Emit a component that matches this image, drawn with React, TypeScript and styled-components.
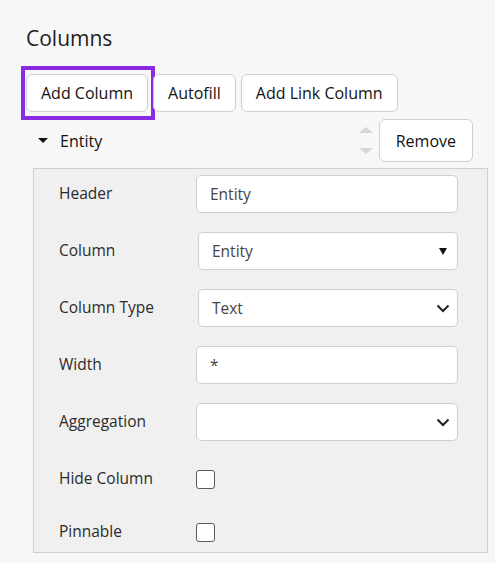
import React from "react";
import styled, { createGlobalStyle } from "styled-components";

const PAGE_BG = `#f7f7f7`;
const PANEL_BG = `#f0f0f0`;
const BORDER_COLOR = `#cfcfcf`;
const HIGHLIGHT = `#8a2be2`;

const GlobalStyle = createGlobalStyle`
  html, body {
    margin: 0;
    padding: 0;
    background: ${PAGE_BG};
  }
  body {
    font-family: "Open Sans", "Noto Sans", sans-serif;
    color: #222;
  }
`;

const Wrapper = styled.div`
  width: 495px;
  height: 563px;
  box-sizing: border-box;
  padding: 23px 0 0 26px;
  overflow: hidden;
`;

const Title = styled.h2`
  margin: 0;
  font-size: 21px;
  font-weight: 400;
  line-height: 30px;
  color: #1e1e1e;
`;

const Toolbar = styled.div`
  display: flex;
  gap: 5px;
  margin-top: 21px;
`;

const Button = styled.button<{ $highlight?: boolean; $tall?: boolean }>`
  position: relative;
  height: ${(p) => (p.$tall ? 43 : 38)}px;
  padding: 0 ${(p) => (p.$tall ? 16 : 14)}px;
  background: #fff;
  border: 1px solid ${BORDER_COLOR};
  border-radius: 6px;
  font-family: inherit;
  font-size: 16px;
  color: #111;
  cursor: pointer;

  ${(p) =>
    p.$highlight &&
    `
    &::after {
      content: "";
      position: absolute;
      top: -9px;
      left: -6px;
      right: -8px;
      bottom: -9px;
      border: 4px solid ${HIGHLIGHT};
      pointer-events: none;
    }
  `}
`;

const EntityRow = styled.div`
  display: flex;
  align-items: center;
  height: 43px;
  margin-top: 7px;
  padding-left: 12px;
  padding-right: 22px;
`;

const Caret = styled.span`
  width: 0;
  height: 0;
  border-left: 5px solid transparent;
  border-right: 5px solid transparent;
  border-top: 5px solid #111;
  margin-right: 12px;
`;

const EntityName = styled.span`
  flex: 1;
  font-size: 16px;
  color: #111;
`;

const Mover = styled.div`
  display: flex;
  flex-direction: column;
  gap: 15px;
  margin-right: 6px;
`;

const Arrow = styled.span<{ $down?: boolean }>`
  width: 0;
  height: 0;
  border-left: 7.5px solid transparent;
  border-right: 7.5px solid transparent;
  ${(p) =>
    p.$down ? `border-top: 6px solid #d6d6d6;` : `border-bottom: 6px solid #d6d6d6;`}
`;

const Panel = styled.div`
  width: 455px;
  box-sizing: border-box;
  margin: 6px 0 0 7px;
  padding: 6px 29px 5px 25px;
  background: ${PANEL_BG};
  border: 1px solid ${BORDER_COLOR};
  display: flex;
  flex-direction: column;
  gap: 19px;
`;

const Row = styled.div<{ $h?: number }>`
  display: grid;
  grid-template-columns: 137px 1fr;
  align-items: center;
  height: ${(p) => p.$h ?? 38}px;
`;

const Label = styled.label`
  font-size: 15.5px;
  color: #2b2b2b;
  margin-top: -2px;
`;

const TextInput = styled.input`
  box-sizing: border-box;
  width: 100%;
  height: 38px;
  padding: 0 13px;
  background: #fff;
  border: 1px solid ${BORDER_COLOR};
  border-radius: 5px;
  font-family: inherit;
  font-size: 15.5px;
  color: #444;
  outline: none;
`;

const SelectBox = styled.div<{ $inset?: boolean }>`
  box-sizing: border-box;
  display: flex;
  align-items: center;
  justify-content: space-between;
  height: 38px;
  margin-left: ${(p) => (p.$inset ? 2 : 0)}px;
  padding: 0 7px 0 13px;
  background: #fff;
  border: 1px solid ${BORDER_COLOR};
  border-radius: 5px;
  font-size: 15.5px;
  color: #444;
`;

const SolidDown = styled.span`
  width: 0;
  height: 0;
  margin-right: 3px;
  border-left: 4px solid transparent;
  border-right: 4px solid transparent;
  border-top: 7px solid #111;
`;

const Checkbox = styled.span`
  box-sizing: border-box;
  width: 19px;
  height: 19px;
  border: 1.5px solid #5a5a5a;
  border-radius: 3px;
  background: #fff;
`;

function Chevron(): JSX.Element {
  return (
    <svg width="14" height="9" viewBox="0 0 14 9">
      <path d="M1.5 1.5 L7 7 L12.5 1.5" fill="none" stroke="#222" strokeWidth="2" />
    </svg>
  );
}

export default function App(): JSX.Element {
  return (
    <>
      <GlobalStyle />
      <Wrapper>
        <Title>Columns</Title>
        <Toolbar>
          <Button $highlight>Add Column</Button>
          <Button>Autofill</Button>
          <Button>Add Link Column</Button>
        </Toolbar>

        <EntityRow>
          <Caret />
          <EntityName>Entity</EntityName>
          <Mover>
            <Arrow />
            <Arrow $down />
          </Mover>
          <Button $tall>Remove</Button>
        </EntityRow>

        <Panel>
          <Row>
            <Label>Header</Label>
            <TextInput defaultValue="Entity" />
          </Row>
          <Row>
            <Label>Column</Label>
            <SelectBox $inset>
              Entity
              <SolidDown />
            </SelectBox>
          </Row>
          <Row>
            <Label>Column Type</Label>
            <SelectBox $inset>
              Text
              <Chevron />
            </SelectBox>
          </Row>
          <Row>
            <Label>Width</Label>
            <TextInput defaultValue="*" />
          </Row>
          <Row>
            <Label>Aggregation</Label>
            <SelectBox>
              <span />
              <Chevron />
            </SelectBox>
          </Row>
          <Row>
            <Label>Hide Column</Label>
            <Checkbox />
          </Row>
          <Row $h={30}>
            <Label>Pinnable</Label>
            <Checkbox />
          </Row>
        </Panel>
      </Wrapper>
    </>
  );
}
